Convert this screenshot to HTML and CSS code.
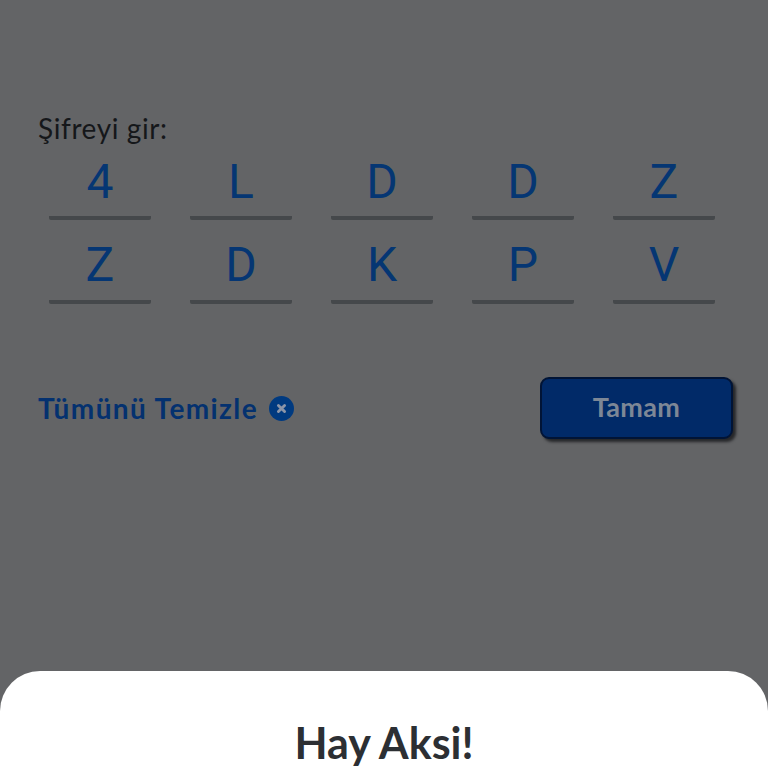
FILE: index.html
```html
<!DOCTYPE html>
<html lang="tr">
<head>
<meta charset="utf-8">
<title>Hay Aksi!</title>
<link rel="stylesheet" href="styles.css">
</head>
<body>
<div class="page">
  <main class="main">
    <p class="label">Şifreyi gir:</p>
    <div class="grid">
      <div class="cell">4</div>
      <div class="cell">L</div>
      <div class="cell">D</div>
      <div class="cell">D</div>
      <div class="cell">Z</div>
      <div class="cell">Z</div>
      <div class="cell">D</div>
      <div class="cell">K</div>
      <div class="cell">P</div>
      <div class="cell">V</div>
    </div>
    <div class="actions">
      <div class="clear">
        <span class="clear-text">Tümünü Temizle</span>
        <svg class="clear-icon" viewBox="0 0 26 26" aria-hidden="true">
          <circle cx="13" cy="13" r="13" fill="#003a80"/>
          <path d="M9.8 9.8l6.4 6.4M16.2 9.8l-6.4 6.4" stroke="#8b95a8" stroke-width="3" stroke-linecap="round" fill="none"/>
        </svg>
      </div>
      <button class="ok" type="button">Tamam</button>
    </div>
  </main>
  <section class="sheet">
    <h1 class="title">Hay Aksi!</h1>
  </section>
</div>
</body>
</html>
```
FILE: styles.css
```css
* { box-sizing: border-box; }
html, body { margin: 0; height: 100%; }
body { overflow: hidden; background: #636466; }
.page {
  width: 768px;
  height: 768px;
  display: flex;
  flex-direction: column;
  overflow: hidden;
  background: #636466;
  font-family: "Lato", "Liberation Sans", sans-serif;
}
.main {
  height: 671px;
  flex: none;
  padding: 112px 36px 0 38px;
}
.label {
  margin: 0;
  font-size: 28px;
  line-height: 32px;
  letter-spacing: 0.6px;
  color: #15171a;
}
.grid {
  display: grid;
  grid-template-columns: repeat(5, 102px);
  column-gap: 39px;
  row-gap: 19px;
  margin: 11px 0 0 11px;
}
.cell {
  height: 65px;
  padding-top: 2px;
  border-bottom: 4px solid #45484b;
  border-radius: 0 0 2px 2px;
  font-family: "Roboto", "Liberation Sans", sans-serif;
  font-size: 48px;
  line-height: 50px;
  text-align: center;
  color: #053673;
}
.cell:nth-child(n+6) {
  padding-top: 1px;
}
.actions {
  display: flex;
  align-items: center;
  justify-content: space-between;
  margin-top: 73px;
}
.clear {
  display: flex;
  align-items: center;
  gap: 11px;
}
.clear-text {
  font-size: 28px;
  font-weight: 700;
  color: #04316f;
  letter-spacing: 1.4px;
}
.clear-icon {
  width: 25px;
  height: 25px;
  display: block;
}
.ok {
  width: 193px;
  height: 62px;
  margin-right: -1px;
  padding-bottom: 4px;
  border: 2px solid #011436;
  border-radius: 9px;
  background: #012a68;
  box-shadow: 3px 3px 3px #26272a;
  color: #7d8796;
  font-family: inherit;
  font-size: 27px;
  font-weight: 700;
  letter-spacing: 0.3px;
}
.sheet {
  flex: 1;
  background: #fff;
  border-radius: 40px 40px 0 0;
  padding-top: 48px;
}
.title {
  margin: 0;
  text-align: center;
  font-size: 43px;
  line-height: 48px;
  font-weight: 700;
  color: #2c2f33;
}
```
